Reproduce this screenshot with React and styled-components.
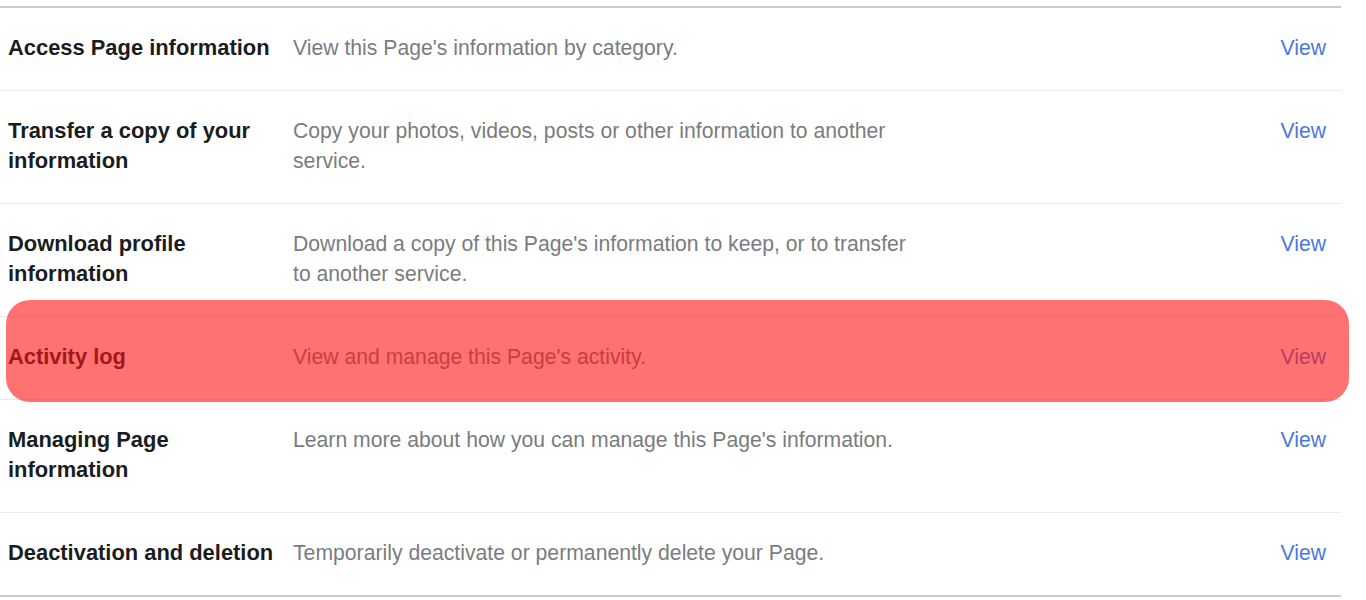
import React from "react";
import styled, { createGlobalStyle } from "styled-components";

const GlobalStyle = createGlobalStyle`
  html, body { margin: 0; padding: 0; background: #ffffff; }
  body { font-family: "Liberation Sans", Arial, sans-serif; }
`;

const Table = styled.div`
  width: 1341px;
  margin-top: 6px;
  border-top: 2px solid #cbcbcb;
  border-bottom: 2px solid #cbcbcb;
`;

const Row = styled.div`
  position: relative;
  display: grid;
  grid-template-columns: 278px 625px 1fr;
  column-gap: 7px;
  align-items: start;
  padding: 25px 15px 27px 8px;
  border-bottom: ${(p) => (p.$last ? "none" : "1px solid #ebebeb")};
  font-size: 21.2px;
  line-height: 30px;

  ${(p) =>
    p.$highlight &&
    `
    &::after {
      content: "";
      position: absolute;
      top: -17px;
      bottom: -3px;
      left: 6px;
      right: -8px;
      border-radius: 24px;
      background: rgba(255, 20, 20, 0.6);
      pointer-events: none;
    }
  `}
`;

const Title = styled.div`
  font-weight: 700;
  color: #1a1c20;
  font-size: 21.9px;
`;

const Desc = styled.div`
  color: #7a7c80;
`;

const ViewLink = styled.a`
  justify-self: end;
  color: #4b78dc;
  text-decoration: none;
  cursor: pointer;
`;

const rows = [
  {
    title: "Access Page information",
    desc: "View this Page's information by category.",
  },
  {
    title: "Transfer a copy of your information",
    desc: "Copy your photos, videos, posts or other information to another service.",
  },
  {
    title: "Download profile information",
    desc: "Download a copy of this Page's information to keep, or to transfer to another service.",
  },
  {
    title: "Activity log",
    desc: "View and manage this Page's activity.",
    highlight: true,
  },
  {
    title: "Managing Page information",
    desc: "Learn more about how you can manage this Page's information.",
  },
  {
    title: "Deactivation and deletion",
    desc: "Temporarily deactivate or permanently delete your Page.",
  },
];

export default function App() {
  return (
    <>
      <GlobalStyle />
      <Table>
        {rows.map((r, i) => (
          <Row key={r.title} $highlight={r.highlight} $last={i === rows.length - 1}>
            <Title>{r.title}</Title>
            <Desc>{r.desc}</Desc>
            <ViewLink>View</ViewLink>
          </Row>
        ))}
      </Table>
    </>
  );
}
